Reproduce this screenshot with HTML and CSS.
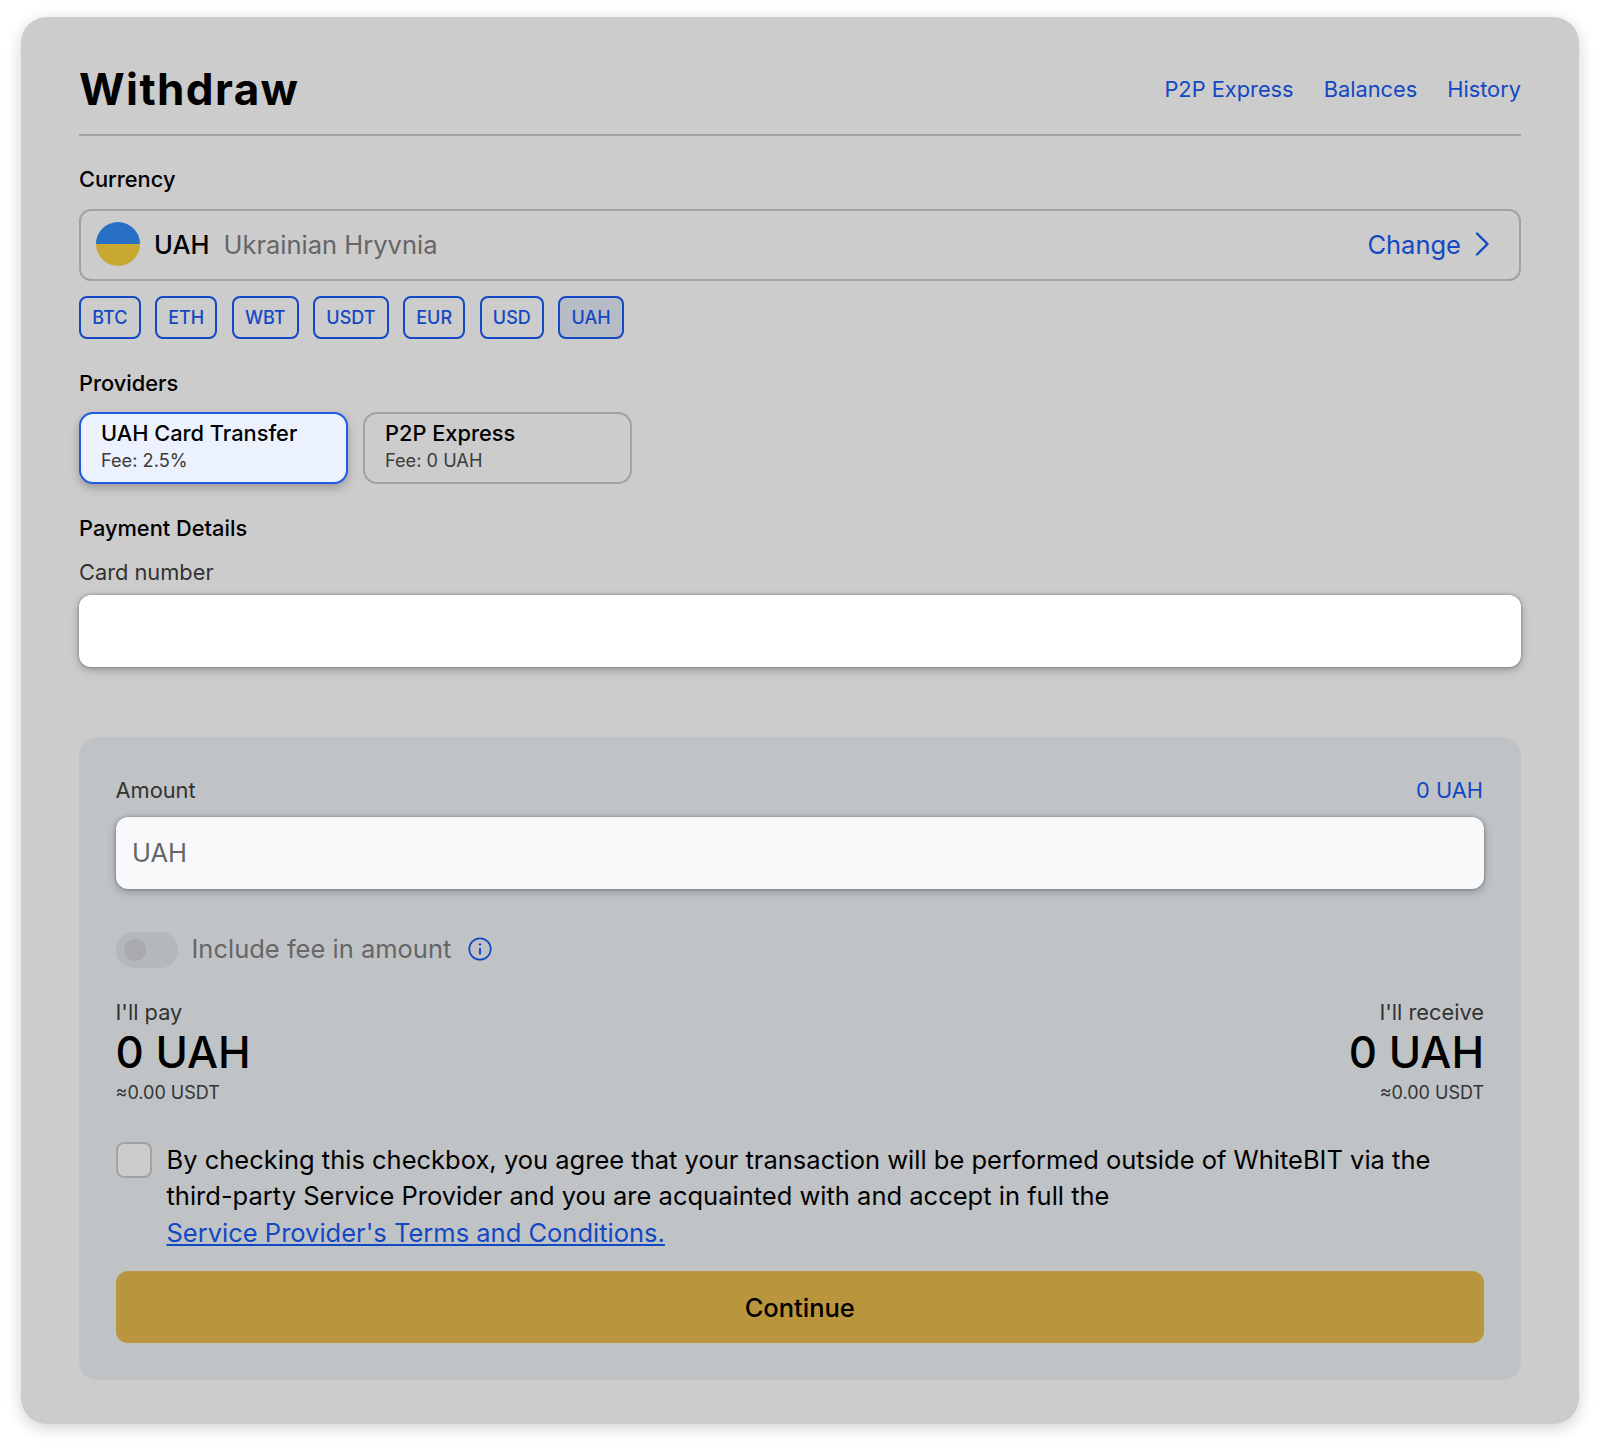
FILE: index.html
```html
<!DOCTYPE html>
<html>
	<head>
		<meta charset="utf-8">
		<title>Withdraw</title>
		<link rel="stylesheet" href="styles.css">
	</head>
	<body>
		<main class="card">
			<header class="head">
				<h1>Withdraw</h1>
				<nav class="head-links">
					<a>P2P Express</a>
					<a>Balances</a>
					<a>History</a>
				</nav>
			</header>

			<p class="label label-currency">Currency</p>
			<div class="select">
				<span class="flag"></span>
				<strong>UAH</strong>
				<span class="select-name">Ukrainian Hryvnia</span>
				<a class="change">Change
					<svg width="18" height="24" viewBox="0 0 18 24" fill="none" stroke="currentColor" stroke-width="2.4" stroke-linecap="round" stroke-linejoin="round"><path d="M3 1.5 L13.5 12 L3 22.5"/></svg>
				</a>
			</div>
			<div class="chips">
				<span class="chip">BTC</span>
				<span class="chip">ETH</span>
				<span class="chip">WBT</span>
				<span class="chip">USDT</span>
				<span class="chip">EUR</span>
				<span class="chip">USD</span>
				<span class="chip active">UAH</span>
			</div>

			<p class="label label-providers">Providers</p>
			<div class="providers">
				<div class="provider active">
					<strong>UAH Card Transfer</strong>
					<span>Fee: 2.5%</span>
				</div>
				<div class="provider">
					<strong>P2P Express</strong>
					<span>Fee: 0 UAH</span>
				</div>
			</div>

			<p class="label label-payment">Payment Details</p>
			<p class="field-label">Card number</p>
			<div class="input input-card"></div>

			<section class="panel">
				<div class="amount-row">
					<span class="field-label">Amount</span>
					<a class="amount-max">0 UAH</a>
				</div>
				<div class="input input-amount">UAH</div>

				<div class="fee-row">
					<span class="toggle"><span class="knob"></span></span>
					<span class="fee-text">Include fee in amount</span>
					<svg class="fee-info" width="24" height="24" viewBox="0 0 24 24" fill="none" stroke="#1348c4"><circle cx="12" cy="12" r="10.7" stroke-width="1.7"/><path d="M12 11v6.5" stroke-width="2"/><circle cx="12" cy="7.4" r="1.2" fill="#1348c4" stroke="none"/></svg>
				</div>

				<div class="totals">
					<div class="total">
						<span class="field-label">I'll pay</span>
						<strong>0 UAH</strong>
						<small>≈0.00 USDT</small>
					</div>
					<div class="total total-right">
						<span class="field-label">I'll receive</span>
						<strong>0 UAH</strong>
						<small>≈0.00 USDT</small>
					</div>
				</div>

				<div class="agree">
					<span class="checkbox"></span>
					<p>By checking this checkbox, you agree that your transaction will be performed outside of WhiteBIT via the third-party Service Provider and you are acquainted with and accept in full the <a>Service Provider's Terms and Conditions.</a></p>
				</div>

				<button class="continue">Continue</button>
			</section>
		</main>
	</body>
</html>
```

FILE: styles.css
```css
html {
	height: 100%;
}
body {
	background: #fff;
	color: #000;
	font-family: Inter, sans-serif;
	margin: 0;
	padding: 17px 21px 25px;
}
p, h1 {
	margin: 0;
}
a {
	color: #1348c4;
}
.card {
	background: #ccc;
	border-radius: 26px;
	box-shadow: 0 4px 16px rgba(0, 0, 0, .18);
	height: 1407px;
	padding: 0 58px;
}
.head {
	align-items: center;
	border-bottom: 2px solid #a2a2a2;
	box-sizing: border-box;
	display: flex;
	height: 119px;
	justify-content: space-between;
	padding-top: 26px;
}
.head h1 {
	font-size: 44px;
	font-weight: 700;
	letter-spacing: 1.4px;
}
.head-links {
	display: flex;
	font-size: 21.8px;
	gap: 30px;
}
.label {
	font-size: 21.8px;
	font-weight: 500;
	line-height: 28px;
}
.label-currency {
	margin-top: 29px;
}
.label-providers {
	margin-top: 29.5px;
}
.label-payment {
	margin-top: 29.5px;
}
.select {
	align-items: center;
	border: 2px solid #a2a2a2;
	border-radius: 12px;
	box-sizing: border-box;
	display: flex;
	font-size: 25.5px;
	height: 72px;
	margin-top: 16px;
	padding: 0 27px 2px 15px;
}
.select strong {
	font-weight: 500;
	margin-left: 14px;
}
.select-name {
	color: #666;
	margin-left: 14px;
}
.flag {
	background: linear-gradient(#2870c4 50%, #c9a832 50%);
	border-radius: 50%;
	height: 44px;
	width: 44px;
}
.change {
	align-items: center;
	display: flex;
	gap: 13px;
	margin-left: auto;
}
.chips {
	display: flex;
	gap: 14.4px;
	margin-top: 15px;
}
.chip {
	align-items: center;
	border: 2px solid #1348c4;
	border-radius: 8px;
	box-sizing: border-box;
	color: #1348c4;
	display: flex;
	font-size: 18px;
	font-weight: 500;
	height: 43px;
	padding: 0 11.2px;
}
.chip.active {
	background: #b6bcc6;
}
.providers {
	display: flex;
	gap: 15px;
	margin-top: 15px;
}
.provider {
	border: 2px solid #a2a2a2;
	border-radius: 14px;
	box-sizing: border-box;
	display: flex;
	flex-direction: column;
	height: 72.5px;
	padding: 4px 20px;
	width: 269px;
}
.provider strong {
	font-size: 21.8px;
	font-weight: 500;
	line-height: 30px;
}
.provider span {
	color: #3c3c3c;
	font-size: 18.2px;
	line-height: 24px;
}
.provider.active {
	background: #ebf1fd;
	border-color: #1f5ae0;
	box-shadow: 0 4px 10px rgba(0, 0, 0, .25);
}
.field-label {
	color: #333;
	font-size: 21.8px;
	line-height: 28px;
}
p.field-label {
	margin-top: 16px;
}
.input {
	border-radius: 12px;
	box-shadow: 0 0 3px rgba(0, 0, 0, .35), 0 3px 10px rgba(0, 0, 0, .25);
	box-sizing: border-box;
	height: 72px;
}
.input-card {
	background: #fff;
	margin-top: 9px;
}
.panel {
	background: #c0c3c6;
	border-radius: 18px;
	box-sizing: border-box;
	height: 643px;
	margin-top: 70px;
	padding: 39px 37px 0 36.5px;
}
.amount-row {
	display: flex;
	font-size: 21.8px;
	justify-content: space-between;
	line-height: 28px;
}
.amount-max {
	margin-right: 1px;
}
.input-amount {
	align-items: center;
	background: #f8f9fb;
	color: #666;
	display: flex;
	font-size: 25.5px;
	margin-top: 13px;
	padding: 0 0 1px 16.5px;
}
.fee-row {
	align-items: center;
	display: flex;
	font-size: 25.5px;
	margin-top: 43px;
}
.toggle {
	align-items: center;
	background: #b4b7bb;
	border-radius: 18px;
	box-sizing: border-box;
	display: flex;
	height: 36px;
	padding-left: 8px;
	width: 62px;
}
.knob {
	background: #a8aaae;
	border-radius: 50%;
	height: 22px;
	width: 22px;
}
.fee-text {
	color: #666;
	margin: 0 17px 2px 14px;
}
.fee-info {
	margin-bottom: 1px;
}
.totals {
	display: flex;
	justify-content: space-between;
	margin-top: 30px;
}
.total {
	display: flex;
	flex-direction: column;
}
.total strong {
	font-size: 43.8px;
	font-weight: 500;
	line-height: 52px;
	margin-top: 1px;
}
.total small {
	color: #333;
	font-size: 18px;
	line-height: 24px;
	margin-top: 2px;
}
.total-right {
	align-items: flex-end;
}
.agree {
	display: flex;
	gap: 15px;
	margin-top: 37px;
}
.checkbox {
	background: #ccc;
	border: 2px solid #a2a2a2;
	border-radius: 8px;
	box-sizing: border-box;
	flex: none;
	height: 36px;
	width: 36px;
}
.agree p {
	font-size: 25.5px;
	line-height: 36.6px;
}
.agree a {
	display: block;
	text-decoration: underline;
}
.continue {
	background: #b9953d;
	border: 0;
	border-radius: 12px;
	color: #000;
	display: block;
	font-family: Inter, sans-serif;
	font-size: 25.5px;
	font-weight: 500;
	height: 72px;
	margin-top: 20px;
	width: 100%;
}
```
